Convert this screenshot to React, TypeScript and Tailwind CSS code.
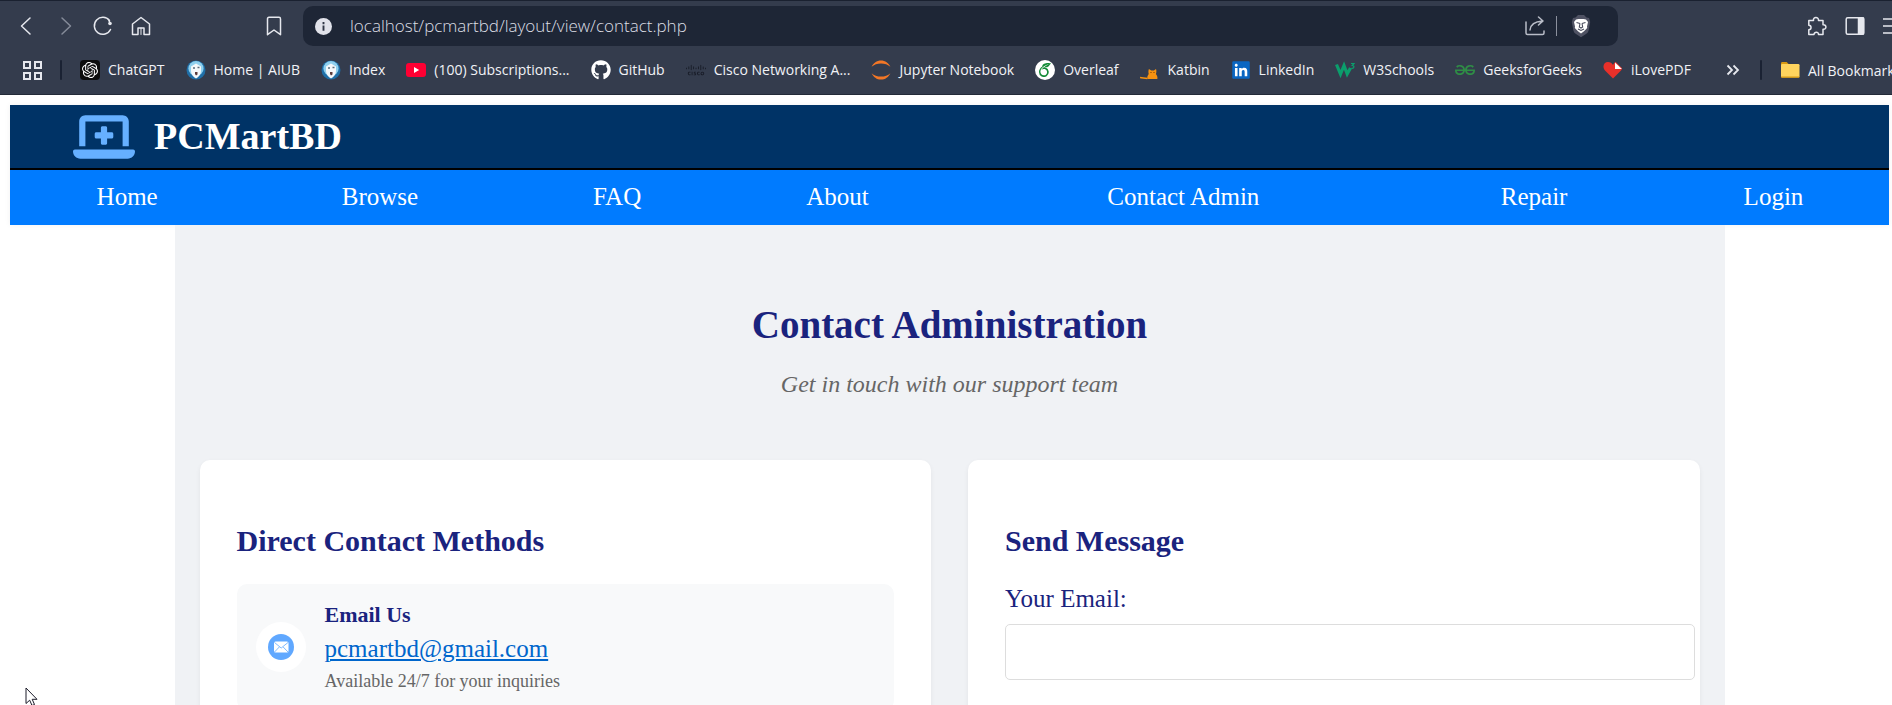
import React from "react";
import { FaGithub, FaLaptopMedical, FaLinkedin } from "react-icons/fa6";
import { SiCisco, SiGeeksforgeeks, SiOpenai, SiOverleaf } from "react-icons/si";

function AiubIcon() {
  return (
    <svg viewBox="0 0 20 20" className="size-5">
      <circle cx="10" cy="10" r="9.5" fill="#1f6fa8" />
      <circle cx="10" cy="8.5" r="7.6" fill="#8fd0ee" />
      <path d="M5 6.5 10 3.5 15 6.5V11c0 3.5-2.4 6-5 7.5C7.400 17 5 14.500 5 11Z" fill="#f4f8fa" />
      <path d="M7 8h2M11.500 7.500h2" stroke="#5b6d7c" strokeWidth="1.300" />
      <path d="M9 12h2.500v2.500L10 15.500 9 14Z" fill="#5a3b3b" />
    </svg>
  );
}

function YoutubeIcon() {
  return (
    <svg viewBox="0 0 20 20" className="size-5">
      <rect x="0" y="3" width="20" height="14" rx="3" fill="#ff0033" />
      <path d="M8 7v6l5.200-3Z" fill="#fff" />
    </svg>
  );
}

function JupyterIcon() {
  return (
    <svg viewBox="0 0 20 20" className="size-5" fill="#f37726">
      <path d="M.6 6.800C2.300 3 5.800.4 10 .4s7.700 2.600 9.400 6.400C17 4.600 13.700 3.400 10 3.400S3 4.600.6 6.800Z" />
      <path d="M.6 13.200C2.300 17 5.800 19.600 10 19.600s7.700-2.600 9.400-6.400c-2.400 2.200-5.700 3.400-9.400 3.400S3 15.400.6 13.200Z" />
    </svg>
  );
}

function KatbinIcon() {
  return (
    <svg viewBox="0 0 20 20" className="size-5">
      <path
        d="M7.500 19c-.6-2 .2-3.500 1.200-5-.4-1.500-.4-3.500.2-5l2.400 1.500h2.600L16 9c.6 1.700.5 3.700-.1 5 1.300 1.500 1.900 3.200 1.400 5Z"
        fill="#f79210"
      />
      <path d="M0 17.500c2 .8 4 .2 7.500 1" stroke="#f79210" strokeWidth="1.600" fill="none" />
      <path d="M11 12v1M14 12v1" stroke="#7a3d00" strokeWidth="1" />
    </svg>
  );
}

function W3Icon() {
  return (
    <svg viewBox="0 0 20 20" className="size-5" fill="none" stroke="#0b9e6c">
      <path d="M1.500 4.500 5.500 14 9 5.500 12.200 14 15.500 8" strokeWidth="3.200" />
      <path d="M16 3.500h3l-1.700 2c2.300 0 2.200 3.300-.9 2.800" strokeWidth="1.200" />
    </svg>
  );
}

function HeartIcon() {
  return (
    <svg viewBox="0 0 20 20" className="size-5">
      <path d="M10 18.500 2 10.500C-1.200 6.500 1 2 5 2c2.200 0 4 1.200 5 3 1-2 2-3 2.800-3L19 8.200c0 1-.4 1.700-1 2.300Z" fill="#e8302a" />
      <path d="M12 2.500V9h6.800Z" fill="#fff" />
    </svg>
  );
}

function FolderIcon() {
  return (
    <svg viewBox="0 0 20 20" className="size-5 shrink-0">
      <path d="M1 3.500C1 2.700 1.500 2 2.300 2h4.400L9 4.500v3H1Z" fill="#d99a12" />
      <rect x="1" y="4" width="18.500" height="13.500" rx="1.200" fill="#ffd45e" />
      <path d="M1 16.500h18.500c0 .8-.5 1.300-1.200 1.300H2.200c-.7 0-1.200-.5-1.200-1.300Z" fill="#d99a12" />
    </svg>
  );
}

function BraveIcon() {
  return (
    <svg viewBox="0 0 20 24" className="h-6 w-5">
      <path d="M4.500 3.500 7 1h6l2.500 2.500L18 4l1.200 4-1.500 8c-.4 2-1.200 3-2.700 4L10 23.300 5 20c-1.500-1-2.300-2-2.700-4L.8 8 2 4Z" fill="#4f5263" />
      <path d="M5 5.500 7.500 5h5l2.500.5L17 8l-1 4.500.2 1.500-3.200 3.300L10 19.500l-3-2.200L3.800 14l.2-1.500L3 8Z" fill="#fff" />
      <path d="M5.500 8.500 9 9.500M14.500 8.500 11 9.500M9 9.500 8.300 13l1.700 1 1.700-1-.7-3.500M7 15l3 1.500L13 15" fill="none" stroke="#4a4d5e" strokeWidth="1.100" />
    </svg>
  );
}

const bookmarks: { label: string; icon: React.ReactNode }[] = [
  {
    label: "ChatGPT",
    icon: (
      <span className="flex size-5 items-center justify-center rounded-[4px] bg-[#0d0d0d]">
        <SiOpenai className="size-4 text-white" />
      </span>
    ),
  },
  { label: "Home | AIUB", icon: <AiubIcon /> },
  { label: "Index", icon: <AiubIcon /> },
  { label: "(100) Subscriptions...", icon: <YoutubeIcon /> },
  { label: "GitHub", icon: <FaGithub className="size-5 text-white" /> },
  { label: "Cisco Networking A...", icon: <SiCisco className="size-5 text-[#171b26]" /> },
  { label: "Jupyter Notebook", icon: <JupyterIcon /> },
  {
    label: "Overleaf",
    icon: (
      <span className="flex size-5 items-center justify-center rounded-full bg-white">
        <SiOverleaf className="size-3.5 text-[#138a36]" />
      </span>
    ),
  },
  { label: "Katbin", icon: <KatbinIcon /> },
  {
    label: "LinkedIn",
    icon: (
      <span className="flex size-5 items-center justify-center">
        <span className="flex size-[14px] items-center justify-center bg-white">
          <FaLinkedin className="size-5 shrink-0 text-[#0a66c2]" />
        </span>
      </span>
    ),
  },
  { label: "W3Schools", icon: <W3Icon /> },
  { label: "GeeksforGeeks", icon: <SiGeeksforgeeks className="size-5 text-[#2f8d46]" /> },
  { label: "iLovePDF", icon: <HeartIcon /> },
];

function ToolButton({ label, children }: { label: string; children: React.ReactNode }) {
  return (
    <button type="button" aria-label={label} className="flex h-10 w-[38px] shrink-0 items-center justify-center">
      <svg
        viewBox="0 0 20 20"
        className="size-5"
        fill="none"
        stroke="#e6e8ee"
        strokeWidth="1.500"
        strokeLinecap="round"
        strokeLinejoin="round"
      >
        {children}
      </svg>
    </button>
  );
}

function BrowserBar() {
  return (
    <div className="shrink-0 overflow-hidden border-t border-b border-t-[#1a2130] border-b-[#232a38] bg-[#343c4d] font-['Open_Sans','Noto_Sans',sans-serif] text-[#f1f2f6]">
      <div className="flex pt-[5px]">
        <div className="flex w-[303px] shrink-0 pl-2">
          <ToolButton label="Back">
            <path d="M13 2 4.500 10l8.500 8" />
          </ToolButton>
          <ToolButton label="Forward">
            <path d="M7 2l8.500 8L7 18" stroke="#858b99" />
          </ToolButton>
          <ToolButton label="Reload">
            <path d="M17.500 13.500A8.500 8.500 0 1 1 16.500 4.500" />
            <circle cx="17" cy="7.500" r="1.800" fill="#e6e8ee" stroke="none" />
            <path d="M16 4.500l1 3" />
          </ToolButton>
          <ToolButton label="Home">
            <path d="M1.500 8 10 1.500 18.500 8v10.500h-5.500v-6.500H7v6.500H1.500Z" />
            <path d="M10 12v6.500" strokeWidth="1" />
          </ToolButton>
          <div className="mr-[10px] ml-auto">
            <ToolButton label="Bookmark this tab">
              <path d="M3.500 3c0-1 .5-1.700 1.500-1.700h10c1 0 1.500.7 1.500 1.700v15.700L10 14l-6.500 4.700Z" />
            </ToolButton>
          </div>
        </div>
        <div className="flex h-10 min-w-0 flex-1 items-center rounded-[10px] bg-[#1e2636] pl-3">
          <svg viewBox="0 0 18 18" className="size-[17px] shrink-0">
            <circle cx="9" cy="9" r="9" fill="#e1e2ea" />
            <path d="M9 8v5.500M9 4.300v2.200" stroke="#2f3545" strokeWidth="2" />
          </svg>
          <input
            type="text"
            aria-label="Address"
            defaultValue="localhost/pcmartbd/layout/view/contact.php"
            className="ml-[18px] min-w-0 flex-1 bg-transparent text-[17px] font-light text-[#dcdee5] outline-none"
          />
          <ToolButton label="Share">
            <path d="M1 6v11c0 1 .5 1.500 1.500 1.500h15c1 0 1.500-.5 1.500-1.500v-2M5 14c.5-5 4-8.500 12.500-9M13.500 1l4.500 4-4.500 4" stroke="#b9bdc8" />
          </ToolButton>
          <span className="mr-[5px] ml-[2px] h-5 w-px bg-[#8b909d]" />
          <button type="button" aria-label="Brave Shields" className="mr-[18px] flex w-[38px] items-center justify-center">
            <BraveIcon />
          </button>
        </div>
        <div className="-mr-5 flex w-[294px] shrink-0 justify-end">
          <ToolButton label="Extensions">
            <path d="M1.800 4.500h4.700c-.8-3.800 5.500-4 5 0h4.500v4.300c4-.6 3.800 5 0 4.500v5.200h-4.500c.3-3-4.600-3-4.500 0H1.800v-4.700c3-.2 3-4.300 0-4.500Z" />
          </ToolButton>
          <ToolButton label="Side panel">
            <rect x="1.200" y="1.800" width="17.500" height="16.500" rx="1.500" />
            <path d="M13.500 2h5v16h-5Z" fill="#e6e8ee" />
          </ToolButton>
          <ToolButton label="Menu">
            <path d="M0 3h20M0 10h20M0 17h20" />
          </ToolButton>
        </div>
      </div>
      <div className="flex h-12 items-center pl-[22px] text-[14px]">
        <button type="button" aria-label="Apps" className="shrink-0">
          <svg viewBox="0 0 20 20" className="size-5" fill="none" stroke="#e6e8ee" strokeWidth="2">
            <path d="M2 2h6v6H2ZM13 2h6v6h-6ZM2 13h6v6H2ZM13 13h6v6h-6Z" />
          </svg>
        </button>
        <span className="mx-[18px] h-5 w-[2px] shrink-0 rounded bg-[#1a2233]" />
        <ul className="flex min-w-0 flex-1 gap-[21px] overflow-hidden whitespace-nowrap">
          {bookmarks.map((b) => (
            <li key={b.label}>
              <a href="#" className="flex items-center gap-2">
                {b.icon}
                <span className="leading-5">{b.label}</span>
              </a>
            </li>
          ))}
        </ul>
        <div className="flex w-[166px] shrink-0 items-center whitespace-nowrap">
          <button type="button" aria-label="More bookmarks">
            <svg viewBox="0 0 14 14" className="size-[14px]" fill="none" stroke="#e6e8ee" strokeWidth="1.800">
              <path d="M1.500 2.500 6 7l-4.500 4.500M7.500 2.500 12 7l-4.500 4.500" />
            </svg>
          </button>
          <span className="mr-[18px] ml-5 h-5 w-[2px] shrink-0 rounded bg-[#1a2233]" />
          <a href="#" className="flex items-center gap-2">
            <FolderIcon />
            <span>All Bookmarks</span>
          </a>
        </div>
      </div>
    </div>
  );
}

const navLinks = ["Home", "Browse", "FAQ", "About", "Contact Admin", "Repair", "Login"];

function SiteHeader() {
  return (
    <header className="shadow-[0_0_6px_rgba(0,0,0,0.06)]">
      <div className="flex h-[65px] items-center gap-[19px] border-b-2 border-black bg-[#003366] pl-[63px]">
        <FaLaptopMedical className="h-[50px] w-[62px] text-[#66b0ff]" />
        <span className="text-[38px] font-bold text-white">PCMartBD</span>
      </div>
      <nav className="bg-[#007bff]">
        <ul className="table w-full text-center text-[25px] leading-[53px] text-white">
          {navLinks.map((l) => (
            <li key={l} className="table-cell px-[18px] pb-[2px] whitespace-nowrap">
              <a href="#">{l}</a>
            </li>
          ))}
        </ul>
      </nav>
    </header>
  );
}

function Card({ title, children }: { title: string; children: React.ReactNode }) {
  return (
    <section className="rounded-[10px] bg-white px-[37px] pt-[63px] pb-[37px] shadow-[0_2px_5px_rgba(0,0,0,0.06)]">
      <h2 className="mb-[25px] text-[30px] leading-9 font-bold text-[#1a237e]">{title}</h2>
      {children}
    </section>
  );
}

export default function App() {
  return (
    <div className="relative flex h-screen flex-col overflow-hidden bg-white font-['Liberation_Serif',serif]">
      <BrowserBar />
      <div className="min-h-0 flex-1 overflow-hidden pt-[10px] pr-[3px] pl-[10px]">
        <SiteHeader />
        <main className="relative mx-auto max-w-[1550px] bg-[#f0f2f5] px-[25px] pt-[76px] pb-[25px]">
          <div className="mb-[62px] text-center">
            <h1 className="mb-[21px] text-[39px] leading-[48px] font-bold text-[#1a237e]">Contact Administration</h1>
            <p className="text-[24px] leading-7 text-[#666666] italic">Get in touch with our support team</p>
          </div>
          <div className="grid grid-cols-2 gap-[37px]">
            <Card title="Direct Contact Methods">
              <div className="flex items-center gap-[19px] rounded-[10px] bg-[#f8f9fa] px-[19px] py-[18px]">
                <span className="flex size-[50px] items-center justify-center rounded-full bg-white">
                  <svg viewBox="0 0 26 26" className="size-[26px]">
                    <circle cx="13" cy="13" r="13" fill="#60a8ff" />
                    <rect x="6" y="7.500" width="14.500" height="11" rx="1.500" fill="#fff" />
                    <path d="M6.500 8.500 13.200 14l6.800-5.500M6.500 18l4.800-5M20 18l-4.800-5" fill="none" stroke="#60a8ff" strokeWidth=".8" />
                  </svg>
                </span>
                <div className="flex flex-col items-start gap-[6px]">
                  <h3 className="text-[22px] leading-[26px] font-bold text-[#1a237e]">Email Us</h3>
                  <a
                    href="mailto:pcmartbd@gmail.com"
                    className="text-[25px] leading-[30px] text-[#0066cc] underline decoration-2 underline-offset-2"
                  >
                    pcmartbd@gmail.com
                  </a>
                  <p className="text-[18px] leading-[22px] text-[#666666]">Available 24/7 for your inquiries</p>
                </div>
              </div>
            </Card>
            <Card title="Send Message">
              <form>
                <label htmlFor="email" className="mb-[10px] block text-[25px] leading-[30px] text-[#1a237e]">
                  Your Email:
                </label>
                <input
                  id="email"
                  type="email"
                  className="h-14 w-[calc(100%+32px)] rounded-[5px] border border-[#dddddd] bg-white px-[15px] text-[20px] outline-none"
                />
              </form>
            </Card>
          </div>
        </main>
      </div>
      <svg viewBox="0 0 14 20" className="pointer-events-none absolute bottom-[-2px] left-[25px] h-5 w-[14px]">
        <path d="M1 1v15.500l3.700-3.300 2.300 5.300 2.500-1-2.300-5.200H12Z" fill="#fff" stroke="#1d1d2b" />
      </svg>
    </div>
  );
}
